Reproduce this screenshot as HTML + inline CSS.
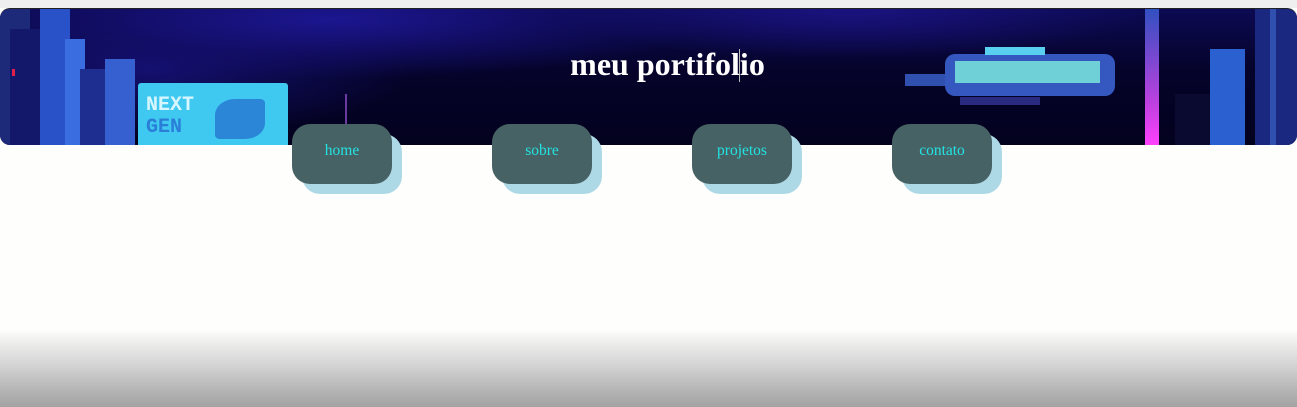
<!DOCTYPE html>
<html><head><meta charset="utf-8"><style>
*{margin:0;padding:0;box-sizing:border-box}
html,body{width:1297px;height:407px;overflow:hidden}
body{position:relative;background:linear-gradient(to bottom,#fefefc 0,#fefefc 330px,#f4f4f3 337px,#d4d4d4 365px,#b5b5b5 390px,#a3a3a3 407px);font-family:"Liberation Serif",serif}
.top{position:absolute;left:0;top:0;width:1297px;height:8px;background:#efefef}
.banner{position:absolute;left:0;top:8px;width:1297px;height:137px;border-radius:10px;overflow:hidden;
background:
radial-gradient(ellipse 380px 60px at 330px 10px,#1c1690 0,rgba(20,15,110,0.6) 60%,transparent 100%),
radial-gradient(ellipse 300px 50px at 850px 0px,#1a1380 0,transparent 100%),
radial-gradient(ellipse 260px 70px at 150px 60px,#141070 0,transparent 100%),
linear-gradient(to bottom,#0c0a52 0,#05032a 45%,#03021e 100%);border-top:1px solid #222}
.b{position:absolute}
h1{position:absolute;left:0;width:1335px;top:46px;text-align:center;color:#fff;font-size:32px;font-weight:bold;font-family:"Liberation Serif",serif}
.caret{position:absolute;left:739px;top:49px;width:1px;height:33px;background:#bbb}
.btn{position:absolute;top:124px;width:100px;height:60px;border-radius:18px;background:#476264;box-shadow:10px 10px 0 #add8e6;color:#22e3e3;font-size:15.5px;text-align:center;padding-top:18px}
</style></head><body>
<div class="top"></div>
<div class="banner">
 <div class="b" style="left:0;top:0;width:30px;height:137px;background:#1d2a7a"></div>
 <div class="b" style="left:10px;top:20px;width:40px;height:117px;background:#14186a"></div>
 <div class="b" style="left:40px;top:0;width:30px;height:137px;background:#2a52c8"></div>
 <div class="b" style="left:65px;top:30px;width:20px;height:107px;background:#3a6ee0"></div>
 <div class="b" style="left:80px;top:60px;width:28px;height:77px;background:#1e2d90"></div>
 <div class="b" style="left:105px;top:50px;width:30px;height:87px;background:#3660d0"></div>
 <div class="b" style="left:12px;top:60px;width:3px;height:7px;background:#e0204a"></div>
 <div class="b" style="left:138px;top:74px;width:150px;height:70px;background:#3fc9f0;border-radius:3px"></div>
 <div class="b" style="left:146px;top:86px;font:bold 20px 'Liberation Mono',monospace;color:#d8f6ff;line-height:22px">NEXT<br><span style="color:#2b7ed8">GEN</span></div>
 <div class="b" style="left:215px;top:90px;width:50px;height:40px;background:#2c86d8;border-radius:40% 10% 40% 10%"></div>
 <div class="b" style="left:345px;top:85px;width:2px;height:30px;background:#6a3aa0"></div>
 <div class="b" style="left:905px;top:65px;width:40px;height:12px;background:#3050b0"></div>
 <div class="b" style="left:945px;top:45px;width:170px;height:42px;background:#3458c0;border-radius:10px"></div>
 <div class="b" style="left:955px;top:52px;width:145px;height:22px;background:#70d0d8"></div>
 <div class="b" style="left:985px;top:38px;width:60px;height:8px;background:#5ad0f0"></div>
 <div class="b" style="left:960px;top:88px;width:80px;height:8px;background:#2a2a80"></div>
 <div class="b" style="left:1145px;top:0;width:14px;height:137px;background:linear-gradient(#3050c0,#c040e0 70%,#ff40ff)"></div>
 <div class="b" style="left:1175px;top:85px;width:60px;height:52px;background:#0a0a30"></div>
 <div class="b" style="left:1210px;top:40px;width:35px;height:97px;background:#2a60d0"></div>
 <div class="b" style="left:1255px;top:0;width:42px;height:137px;background:#1a2880"></div>
 <div class="b" style="left:1270px;top:0;width:6px;height:137px;background:#3050b0"></div>
</div>
<h1>meu portifolio</h1>
<div class="caret"></div>
<div class="btn" style="left:292px">home</div>
<div class="btn" style="left:492px">sobre</div>
<div class="btn" style="left:692px">projetos</div>
<div class="btn" style="left:892px">contato</div>
</body></html>
